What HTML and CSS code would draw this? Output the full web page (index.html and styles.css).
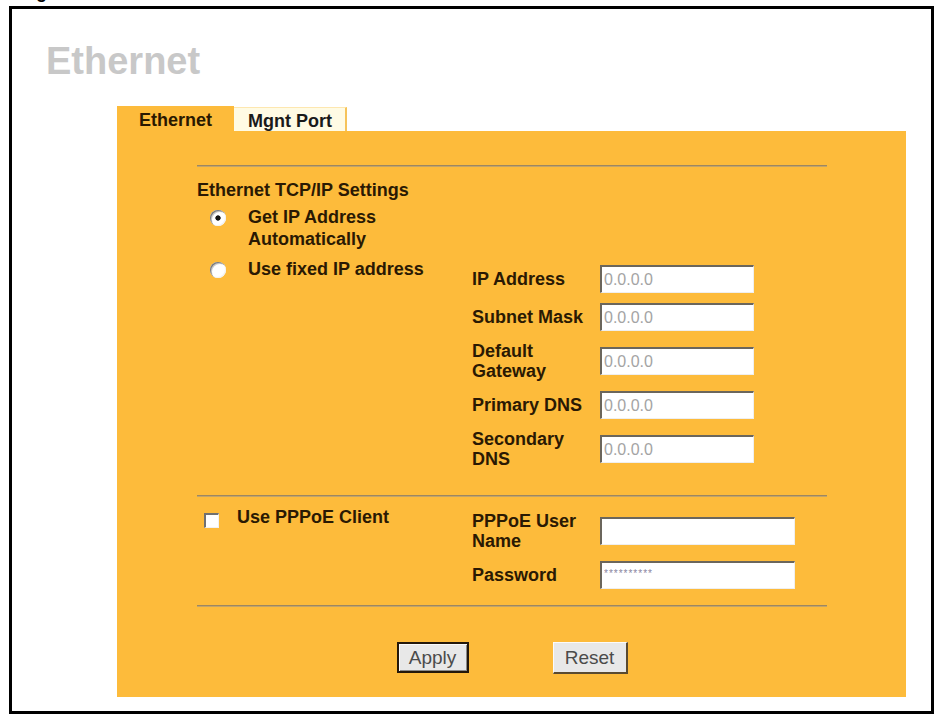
FILE: index.html
```html
<!DOCTYPE html>
<html lang="en">
<head>
<meta charset="utf-8">
<title>Ethernet</title>
<link rel="stylesheet" href="styles.css">
</head>
<body>
<div class="caption">Figure 52 Ethernet</div>
<div class="frame">
  <h1 class="title">Ethernet</h1>
  <div class="panel">
    <div class="tabs">
      <div class="tab tab-active">Ethernet</div>
      <div class="tab tab-other">Mgnt Port</div>
    </div>
    <div class="panel-body">
      <div class="rule"></div>
      <div class="section-title">Ethernet TCP/IP Settings</div>
      <div class="row row-first">
        <div class="left">
          <span class="radio checked"></span>
          <span class="opt-text">Get IP Address Automatically</span>
        </div>
      </div>
      <div class="row row-second">
        <div class="left">
          <span class="radio"></span>
          <span class="opt-text">Use fixed IP address</span>
        </div>
        <div class="fields fields-ip">
          <span class="field-label">IP Address</span>
          <input class="field" type="text" value="0.0.0.0" readonly>
          <span class="field-label">Subnet Mask</span>
          <input class="field" type="text" value="0.0.0.0" readonly>
          <span class="field-label">Default Gateway</span>
          <input class="field" type="text" value="0.0.0.0" readonly>
          <span class="field-label">Primary DNS</span>
          <input class="field" type="text" value="0.0.0.0" readonly>
          <span class="field-label">Secondary DNS</span>
          <input class="field" type="text" value="0.0.0.0" readonly>
        </div>
      </div>
      <div class="rule rule-2"></div>
      <div class="row row-pppoe">
        <div class="left">
          <span class="checkbox"></span>
          <span class="opt-text">Use PPPoE Client</span>
        </div>
        <div class="fields fields-pppoe">
          <span class="field-label">PPPoE User Name</span>
          <input class="field" type="text" value="" readonly>
          <span class="field-label">Password</span>
          <input class="field field-pass" type="text" value="**********" readonly>
        </div>
      </div>
      <div class="rule rule-3"></div>
      <div class="buttons">
        <button class="btn btn-apply" type="button">Apply</button>
        <button class="btn btn-reset" type="button">Reset</button>
      </div>
    </div>
  </div>
</div>
</body>
</html>
```
FILE: styles.css
```css
html, body {
  margin: 0;
  padding: 0;
  background: #ffffff;
}

body {
  font-family: "Liberation Sans", Arial, sans-serif;
  width: 937px;
  height: 717px;
  overflow: hidden;
}

.caption {
  margin-top: -18px;
  padding-left: 20px;
  height: 20px;
  font-size: 18px;
  line-height: 20px;
  font-weight: bold;
  color: #000;
  white-space: nowrap;
}

.frame {
  margin: 4px 0 0 9px;
  width: 925px;
  height: 708px;
  box-sizing: border-box;
  border: 3px solid #000;
}

.title {
  margin: 32px 0 0 34px;
  font-size: 38px;
  line-height: 40px;
  font-weight: bold;
  color: #c8c8c8;
}

.panel {
  margin: 25px 0 0 105px;
  width: 789px;
}

.tabs {
  display: flex;
  align-items: flex-end;
  height: 25px;
}

.tab {
  box-sizing: border-box;
  font-size: 18px;
  line-height: 21px;
  font-weight: bold;
  white-space: nowrap;
}

.tab-active {
  height: 25px;
  padding: 4px 22px 0;
  background: #fdbb3b;
  color: #2a1800;
}

.tab-other {
  width: 113px;
  height: 24px;
  padding: 3px 0 0 14px;
  background: #fffbe4;
  color: #1a1a1a;
  border-top: 1px solid #fde7b0;
  border-right: 2px solid #f6c35a;
}

.panel-body {
  background: #fdbb3b;
  padding: 34px 79px 23px 80px;
  color: #2a1903;
  font-size: 18px;
  font-weight: bold;
}

.rule {
  height: 1px;
  border-bottom: 1px solid #c3a468;
  background: #9c8762;
}

.section-title {
  margin-top: 13px;
  line-height: 20px;
}

.row {
  display: flex;
  align-items: flex-start;
}

.row-first {
  margin-top: 6px;
}

.row-second {
  margin-top: 8px;
}

.left {
  flex: none;
  width: 275px;
  display: flex;
  align-items: flex-start;
}

.opt-text {
  line-height: 22px;
}

.radio {
  flex: none;
  width: 16px;
  height: 16px;
  margin: 4px 22px 0 13px;
  border-radius: 50%;
  background: #ffffff;
  box-shadow: inset 1px 1px 0 #7c7c7c, inset 2px 2px 0 #c9c9c9, inset -1px -1px 0 #f2f2f2;
}

.radio.checked {
  background: radial-gradient(circle at 50% 50%, #141414 0, #141414 2.3px, #ffffff 3px);
}

.checkbox {
  flex: none;
  width: 15px;
  height: 15px;
  margin: 7px 18px 0 7px;
  box-sizing: border-box;
  background: #ffffff;
  border-top: 2px solid #707070;
  border-left: 2px solid #707070;
  border-right: 1px solid #f2f2f2;
  border-bottom: 1px solid #f2f2f2;
}

.fields {
  display: grid;
  grid-template-columns: 128px 154px;
  row-gap: 10px;
  align-items: center;
  margin-top: 7px;
}

.fields-pppoe {
  grid-template-columns: 128px 195px;
  margin-top: 5px;
}

.field-label {
  line-height: 20px;
}

.field {
  display: block;
  width: 100%;
  height: 28px;
  margin: 0;
  box-sizing: border-box;
  padding: 0 0 0 2px;
  background: #ffffff;
  border-top: 2px solid #6b665c;
  border-left: 2px solid #6b665c;
  border-right: 1px solid #efefef;
  border-bottom: 1px solid #efefef;
  font-family: "Liberation Sans", Arial, sans-serif;
  font-size: 16px;
  font-weight: normal;
  color: #a4a4a4;
  outline: none;
}

.field-pass {
  font-size: 10px;
  letter-spacing: 1px;
  color: #8a86a0;
  padding-bottom: 4px;
}

.rule-2 {
  margin-top: 26px;
}

.row-pppoe {
  margin-top: 9px;
}

.rule-3 {
  margin-top: 16px;
}

.buttons {
  display: flex;
  justify-content: center;
  align-items: flex-start;
  gap: 84px;
  margin-top: 35px;
}

.btn {
  box-sizing: border-box;
  height: 31px;
  padding: 0;
  margin: 0;
  background: #e8e8e8;
  font-family: "Liberation Sans", Arial, sans-serif;
  font-size: 19px;
  font-weight: normal;
  color: #4b4b4b;
}

.btn-apply {
  width: 72px;
  border: 2px solid #24180a;
  box-shadow: inset 1px 1px 0 #fafafa, inset -1px -1px 0 #8a8a8a;
}

.btn-reset {
  width: 75px;
  height: 32px;
  border-top: 1px solid #fbfbfb;
  border-left: 1px solid #fbfbfb;
  border-right: 2px solid #5a4a30;
  border-bottom: 2px solid #5a4a30;
}
```
